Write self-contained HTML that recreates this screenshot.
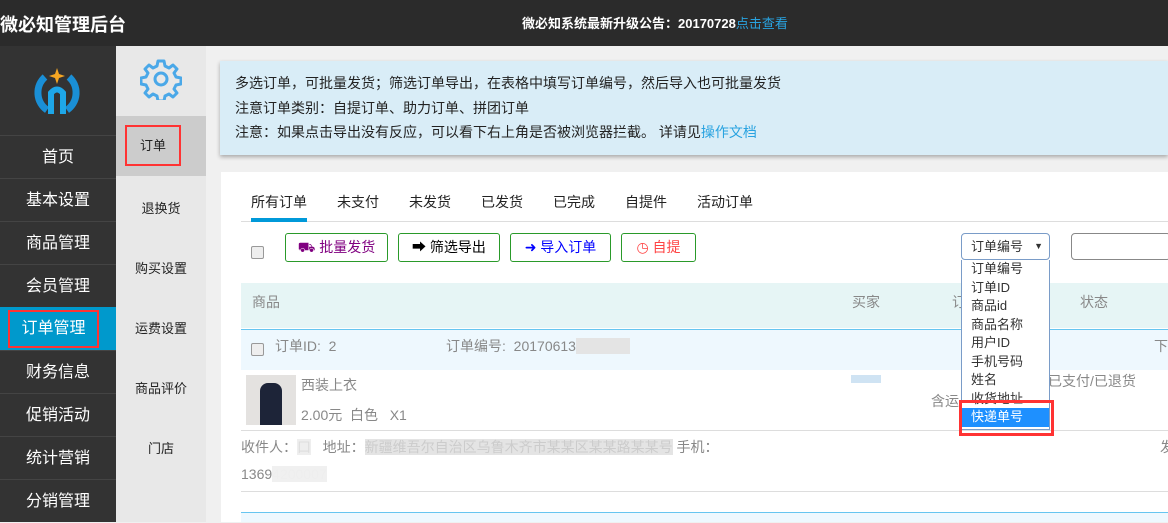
<!DOCTYPE html>
<html><head><meta charset="utf-8"><style>
*{margin:0;padding:0;box-sizing:border-box}
body{width:1168px;height:522px;overflow:hidden;background:#f0f0f0;font-family:"Liberation Sans","Noto Sans CJK SC",sans-serif;font-size:14px;color:#333;position:relative}
.a{position:absolute}
.top{left:0;top:0;width:1168px;height:46px;background:#2b2b2b;color:#fff}
.side{left:0;top:46px;width:116px;height:476px;background:#333}
.si{position:absolute;left:0;width:116px;height:43px;border-top:1px solid #444;color:#fff;font-size:16px;text-align:center;line-height:43px}
.side2{left:116px;top:46px;width:90px;height:476px;background:#e8e8e8}
.s2{position:absolute;left:0;width:90px;text-align:center;font-size:13px;color:#222}
.tab{position:absolute;top:192px;font-size:14px;color:#222}
.btn{position:absolute;top:233px;height:29px;border:1px solid #2a9a2a;border-radius:3px;background:#fff;font-size:14px;text-align:center;line-height:27px}
.g{color:#888;font-size:14px}
</style></head><body>
<div class="a top"><div class="a" style="left:0;top:11px;font-size:18px;font-weight:bold">微必知管理后台</div>
<div class="a" style="left:522px;top:13px;font-size:13px;font-weight:bold">微必知系统最新升级公告：20170728<span style="color:#29a3e0;font-weight:normal">点击查看</span></div></div>
<div class="a side">
<svg class="a" style="left:32px;top:20px" width="50" height="50" viewBox="0 0 50 50"><path d="M13 11 A21 21 0 0 0 15 44" stroke="#1a8fd6" stroke-width="7" fill="none"/><path d="M37 11 A21 21 0 0 1 35 44" stroke="#1a8fd6" stroke-width="7" fill="none"/><path d="M19 48 V27 Q25 20 31 27 V48" stroke="#1ea7e8" stroke-width="6" fill="none"/><path d="M25 2 L27 8 L33 10 L27 12 L25 18 L23 12 L17 10 L23 8Z" fill="#f5a623"/></svg>
<div class="si" style="top:89px">首页</div>
<div class="si" style="top:132px">基本设置</div>
<div class="si" style="top:175px">商品管理</div>
<div class="si" style="top:218px">会员管理</div>
<div class="si" style="top:261px;background:#0099cc;border-top:none"><span style="position:absolute;left:8px;top:3px;border:2px solid #f33;width:91px;height:38px;line-height:34px">订单管理</span></div>
<div class="si" style="top:304px">财务信息</div>
<div class="si" style="top:347px">促销活动</div>
<div class="si" style="top:390px">统计营销</div>
<div class="si" style="top:433px">分销管理</div>
</div>
<div class="a side2">
<svg class="a" style="left:24px;top:12px" width="42" height="42" viewBox="0 0 42 42"><path d="M18 3h6l1 5 4 2 4-3 4 4-3 4 2 4 5 1v6l-5 1-2 4 3 4-4 4-4-3-4 2-1 5h-6l-1-5-4-2-4 3-4-4 3-4-2-4-5-1v-6l5-1 2-4-3-4 4-4 4 3 4-2z" fill="none" stroke="#4aa8e8" stroke-width="3" stroke-linejoin="round"/><circle cx="21" cy="21" r="6" fill="none" stroke="#4aa8e8" stroke-width="3"/></svg>
<div class="a" style="left:0;top:70px;width:90px;height:60px;background:#ccc"></div>
<div class="a" style="left:9px;top:79px;width:56px;height:41px;border:2px solid #f33;text-align:center;line-height:37px;font-size:13px;color:#222">订单</div>
<div class="a" style="left:82px;top:92px;width:0;height:0;border:8px solid transparent;border-right-color:#f0f0f0"></div>
<div class="s2" style="top:152px">退换货</div>
<div class="s2" style="top:212px">购买设置</div>
<div class="s2" style="top:272px">运费设置</div>
<div class="s2" style="top:332px">商品评价</div>
<div class="s2" style="top:392px">门店</div>
</div>
<div class="a" style="left:220px;top:61px;width:948px;height:94px;background:#d9edf7;box-shadow:0 2px 4px rgba(0,0,0,.3);font-size:14px;color:#222;line-height:24.5px;padding:10px 0 0 15px">多选订单，可批量发货；筛选订单导出，在表格中填写订单编号，然后导入也可批量发货<br>注意订单类别：自提订单、助力订单、拼团订单<br>注意：如果点击导出没有反应，可以看下右上角是否被浏览器拦截。 详请见<span style="color:#29a3e0">操作文档</span></div>
<div class="a" style="left:221px;top:172px;width:947px;height:350px;background:#fff"></div>
<div class="a" style="left:241px;top:221px;width:927px;height:1px;background:#ddd"></div>
<div class="a" style="left:251px;top:218px;width:56px;height:4px;background:#0099d9"></div>
<div class="tab" style="left:251px">所有订单</div><div class="tab" style="left:337px">未支付</div><div class="tab" style="left:409px">未发货</div><div class="tab" style="left:481px">已发货</div><div class="tab" style="left:553px">已完成</div><div class="tab" style="left:625px">自提件</div><div class="tab" style="left:697px">活动订单</div>
<div class="a" style="left:251px;top:246px;width:13px;height:13px;border:1px solid #999;border-radius:2px;background:#eee"></div>
<div class="btn" style="left:285px;width:103px;color:#800080">⛟ 批量发货</div>
<div class="btn" style="left:398px;width:102px;color:#000">➡ 筛选导出</div>
<div class="btn" style="left:510px;width:101px;color:#00f">➜ 导入订单</div>
<div class="btn" style="left:621px;width:75px;color:#f44">◷ 自提</div>
<div class="a" style="left:241px;top:283px;width:927px;height:45px;background:#e6f5f5"></div>
<div class="a g" style="left:252px;top:292px">商品</div><div class="a g" style="left:852px;top:292px">买家</div><div class="a g" style="left:952px;top:292px">订</div><div class="a g" style="left:1080px;top:292px">状态</div>
<div class="a" style="left:241px;top:329px;width:927px;height:41px;background:#eef8fe;border-top:1px solid #66c5f0"></div>
<div class="a" style="left:251px;top:343px;width:13px;height:13px;border:1px solid #999;border-radius:2px;background:#eee"></div>
<div class="a g" style="left:275px;top:336px">订单ID:&nbsp; 2</div><div class="a g" style="left:446px;top:336px">订单编号:&nbsp; 20170613<span style="background:#e4e4e4;color:#e4e4e4">8888888</span></div><div class="a g" style="left:1154px;top:336px">下</div>
<div class="a" style="left:246px;top:375px;width:50px;height:50px;background:#e4e2e0"><div style="margin:8px 0 0 14px;width:22px;height:42px;background:#1d2438;border-radius:8px 8px 0 0"></div></div>
<div class="a g" style="left:301px;top:375px">西装上衣</div>
<div class="a g" style="left:301px;top:405px">2.00元 &nbsp;白色 &nbsp; X1</div>
<div class="a" style="left:851px;top:375px;width:30px;height:8px;background:#cfe3f3"></div>
<div class="a g" style="left:931px;top:391px">含运</div><div class="a g" style="left:1048px;top:371px">已支付/已退货</div>
<div class="a" style="left:241px;top:430px;width:927px;height:1px;background:#ddd"></div>
<div class="a g" style="left:241px;top:437px">收件人：<span style="color:#ddd;background:#eee">口</span> &nbsp; 地址：<span style="color:#ccc;background:#e4e4e4">新疆维吾尔自治区乌鲁木齐市某某区某某路某某号</span>&nbsp;手机：</div>
<div class="a g" style="left:1160px;top:437px">发</div>
<div class="a g" style="left:241px;top:466px">1369<span style="color:#eee;background:#f0f0f0">4200007</span></div>
<div class="a" style="left:241px;top:491px;width:927px;height:1px;background:#ddd"></div>
<div class="a" style="left:241px;top:512px;width:927px;height:10px;background:#eef8fe;border-top:1px solid #66c5f0"></div>
<div class="a" style="left:961px;top:233px;width:89px;height:27px;border:1px solid #7a9cc8;border-radius:4px;background:#fff;font-size:13px;color:#333;line-height:25px;padding-left:9px">订单编号<span style="position:absolute;right:6px;font-size:9px">▼</span></div>
<div class="a" style="left:1071px;top:233px;width:100px;height:27px;border:1px solid #888;border-radius:4px;background:#fff"></div>
<div class="a" style="left:961px;top:260px;width:89px;height:170px;border:1px solid #7a9cc8;border-top:none;background:#fff;font-size:13px;line-height:18.5px;color:#333">
<div style="padding-left:9px">订单编号</div><div style="padding-left:9px">订单ID</div><div style="padding-left:9px">商品id</div><div style="padding-left:9px">商品名称</div><div style="padding-left:9px">用户ID</div><div style="padding-left:9px">手机号码</div><div style="padding-left:9px">姓名</div><div style="padding-left:9px">收货地址</div><div style="padding-left:9px;background:#1e90ff;color:#fff">快递单号</div></div>
<div class="a" style="left:959px;top:400px;width:95px;height:36px;border:3px solid #f33"></div>
</body></html>
